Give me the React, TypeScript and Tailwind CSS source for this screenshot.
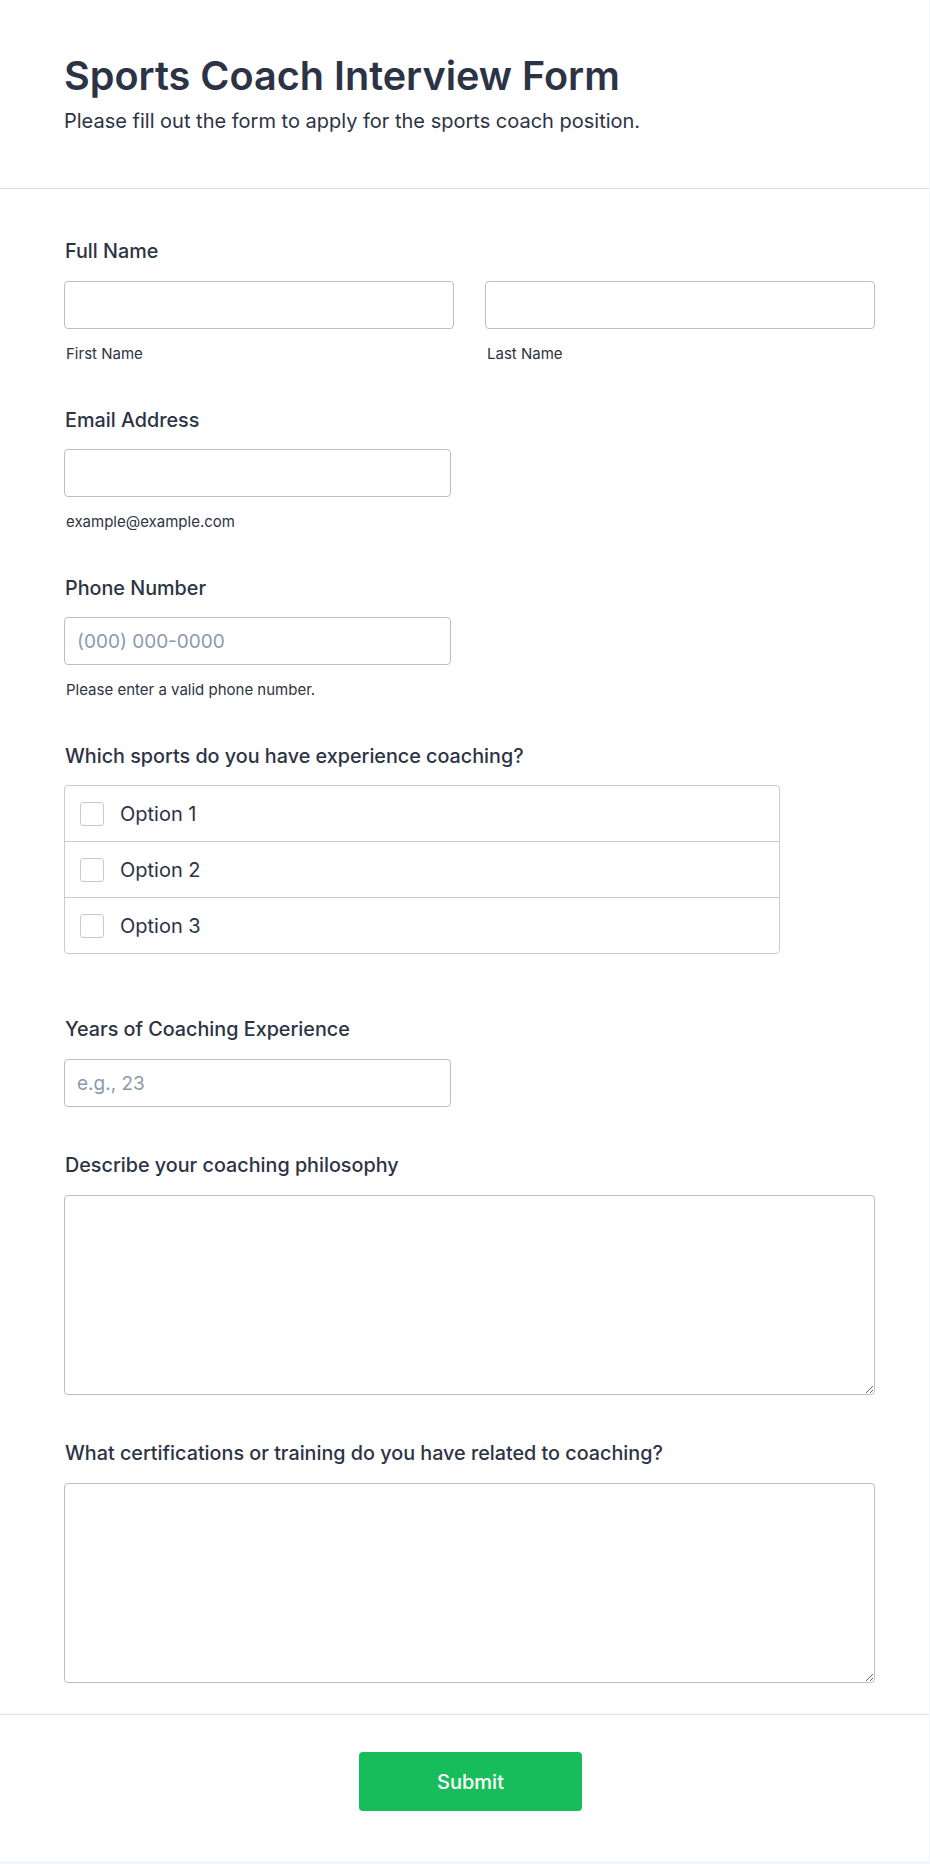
import React from 'react';

const inputCls =
  "block h-[48px] rounded-[4px] border border-[#b8bdc9] bg-white px-3 text-[19px] text-[#2c3345] placeholder:text-[#8c99ad] outline-none";

function Label({ children }: { children: React.ReactNode }) {
  return <label className="block pl-px text-[19.75px] leading-[24px] font-medium text-[#2c3345]">{children}</label>;
}

function Sublabel({ children }: { children: React.ReactNode }) {
  return <span className="block pl-0.5 mt-[15px] text-[15px] leading-[20px] text-[#2c3345]">{children}</span>;
}

export default function App() {
  const options = ['Option 1', 'Option 2', 'Option 3'];

  return (
    <div className="min-h-screen bg-[#f3f3fe] pb-[3px]" style={{ fontFamily: 'Inter, "Noto Sans", sans-serif' }}>
      <div className="w-[929px] bg-white text-[#2c3345]">
        <header className="pl-16 pt-[52px] pb-[53px] border-b border-[#dadde6]">
          <h1 className="text-[39.6px] leading-[48px] font-semibold">Sports Coach Interview Form</h1>
          <p className="mt-[7px] text-[20px] leading-[28px]">Please fill out the form to apply for the sports coach position.</p>
        </header>

        <div className="pl-16 w-[875px]">
          {/* full name */}
          <div className="pt-[50px]">
            <Label>Full Name</Label>
            <div className="mt-[18px] flex gap-[31px]">
              <div className="w-[390px]">
                <input className={`${inputCls} w-full`} />
                <Sublabel>First Name</Sublabel>
              </div>
              <div className="w-[390px]">
                <input className={`${inputCls} w-full`} />
                <Sublabel>Last Name</Sublabel>
              </div>
            </div>
          </div>

          {/* email */}
          <div className="mt-[44px]">
            <Label>Email Address</Label>
            <input className={`${inputCls} mt-[17px] w-[387px]`} />
            <Sublabel>example@example.com</Sublabel>
          </div>

          {/* phone */}
          <div className="mt-[44px]">
            <Label>Phone Number</Label>
            <input className={`${inputCls} mt-[17px] w-[387px]`} placeholder="(000) 000-0000" />
            <Sublabel>Please enter a valid phone number.</Sublabel>
          </div>

          {/* sports */}
          <div className="mt-[44px]">
            <Label>Which sports do you have experience coaching?</Label>
            <div className="mt-[17px] w-[716px] rounded-[4px] border border-[#c8ccd6]">
              {options.map((o, i) => (
                <div
                  key={o}
                  className={`flex h-[55px] items-center gap-4 pl-[15px] ${i > 0 ? 'border-t border-[#c8ccd6] h-[56px]' : ''}`}
                >
                  <span className="h-[24px] w-[24px] rounded-[3px] border border-[#c3cad8] bg-white" />
                  <span className="text-[20px] text-[#2c3345]">{o}</span>
                </div>
              ))}
            </div>
          </div>

          {/* years */}
          <div className="mt-[63px]">
            <Label>Years of Coaching Experience</Label>
            <input className={`${inputCls} mt-[18px] w-[387px]`} placeholder="e.g., 23" />
          </div>

          {/* philosophy */}
          <div className="mt-[46px]">
            <Label>Describe your coaching philosophy</Label>
            <textarea className="mt-[18px] block h-[200px] w-full rounded-[4px] border border-[#b8bdc9] bg-white p-3 text-[19px] outline-none" />
          </div>

          {/* certifications */}
          <div className="mt-[46px] pb-[31px]">
            <Label>What certifications or training do you have related to coaching?</Label>
            <textarea className="mt-[18px] block h-[200px] w-full rounded-[4px] border border-[#b8bdc9] bg-white p-3 text-[19px] outline-none" />
          </div>
        </div>

        <div className="border-t border-[#dadde6] pt-[37px] pb-[50px]">
          <div className="pl-[66px] w-[875px] flex justify-center">
            <button className="h-[59px] w-[223px] rounded-[4px] bg-[#18bd5b] text-[20px] font-medium text-white">
              Submit
            </button>
          </div>
        </div>
      </div>
    </div>
  );
}
